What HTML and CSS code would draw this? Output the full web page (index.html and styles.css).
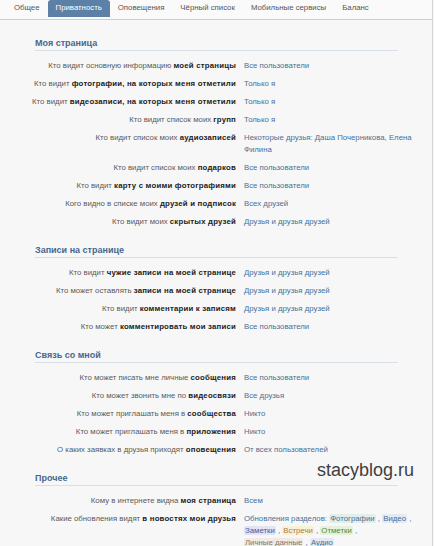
FILE: index.html
```html
<!DOCTYPE html>
<html lang="ru">
<head>
<meta charset="utf-8">
<title>Приватность</title>
<link rel="stylesheet" href="styles.css">
</head>
<body>
<div class="page">
  <nav class="tabs">
    <a class="tab">Общее</a>
    <a class="tab active">Приватность</a>
    <a class="tab">Оповещения</a>
    <a class="tab">Чёрный список</a>
    <a class="tab">Мобильные сервисы</a>
    <a class="tab">Баланс</a>
  </nav>
  <div class="content">
    <section class="sec">
      <h2 class="sec-title">Моя страница</h2>
      <div class="rows">
        <div class="row"><div class="label">Кто видит основную информацию <b>моей страницы</b></div><div class="value">Все пользователи</div></div>
        <div class="row"><div class="label">Кто видит <b>фотографии, на которых меня отметили</b></div><div class="value">Только я</div></div>
        <div class="row"><div class="label">Кто видит <b>видеозаписи, на которых меня отметили</b></div><div class="value">Только я</div></div>
        <div class="row"><div class="label">Кто видит список моих <b>групп</b></div><div class="value">Только я</div></div>
        <div class="row"><div class="label">Кто видит список моих <b>аудиозаписей</b></div><div class="value">Некоторые друзья: Даша Почерникова, Елена Филина</div></div>
        <div class="row"><div class="label">Кто видит список моих <b>подарков</b></div><div class="value">Все пользователи</div></div>
        <div class="row"><div class="label">Кто видит <b>карту с моими фотографиями</b></div><div class="value">Все пользователи</div></div>
        <div class="row"><div class="label">Кого видно в списке моих <b>друзей и подписок</b></div><div class="value">Всех друзей</div></div>
        <div class="row"><div class="label">Кто видит моих <b>скрытых друзей</b></div><div class="value">Друзья и друзья друзей</div></div>
      </div>
    </section>
    <section class="sec">
      <h2 class="sec-title">Записи на странице</h2>
      <div class="rows">
        <div class="row"><div class="label">Кто видит <b>чужие записи на моей странице</b></div><div class="value">Друзья и друзья друзей</div></div>
        <div class="row"><div class="label">Кто может оставлять <b>записи на моей странице</b></div><div class="value">Друзья и друзья друзей</div></div>
        <div class="row"><div class="label">Кто видит <b>комментарии к записям</b></div><div class="value">Друзья и друзья друзей</div></div>
        <div class="row"><div class="label">Кто может <b>комментировать мои записи</b></div><div class="value">Все пользователи</div></div>
      </div>
    </section>
    <section class="sec">
      <h2 class="sec-title">Связь со мной</h2>
      <div class="rows">
        <div class="row"><div class="label">Кто может писать мне личные <b>сообщения</b></div><div class="value">Все пользователи</div></div>
        <div class="row"><div class="label">Кто может звонить мне по <b>видеосвязи</b></div><div class="value">Все друзья</div></div>
        <div class="row"><div class="label">Кто может приглашать меня в <b>сообщества</b></div><div class="value">Никто</div></div>
        <div class="row"><div class="label">Кто может приглашать меня в <b>приложения</b></div><div class="value">Никто</div></div>
        <div class="row"><div class="label">О каких заявках в друзья приходят <b>оповещения</b></div><div class="value">От всех пользователей</div></div>
      </div>
    </section>
    <section class="sec">
      <h2 class="sec-title">Прочее</h2>
      <div class="rows">
        <div class="row"><div class="label">Кому в интернете видна <b>моя страница</b></div><div class="value">Всем</div></div>
        <div class="row"><div class="label">Какие обновления видят <b>в новостях мои друзья</b></div><div class="value tags">Обновления разделов: <span class="tag t-photo">Фотографии</span> , <span class="tag t-video">Видео</span> , <span class="tag t-notes">Заметки</span> , <span class="tag t-events">Встречи</span> , <span class="tag t-marks">Отметки</span> , <span class="tag t-personal">Личные данные</span> , <span class="tag t-audio">Аудио</span></div></div>
      </div>
    </section>
  </div>
  <div class="watermark">stacyblog.ru</div>
</div>
</body>
</html>
```

FILE: styles.css
```css
html, body {
  margin: 0;
  padding: 0;
  background: #f7f7f7;
}

.page {
  position: relative;
  width: 432px;
  height: 546px;
  overflow: hidden;
  border-right: 1px solid #cfd4d9;
  background: #f7f7f7;
  font-family: "Liberation Sans", Arial, sans-serif;
  font-size: 7.8px;
  color: #555;
}

.tabs {
  display: flex;
  align-items: flex-end;
  height: 19px;
  padding-left: 6px;
  background: #fafafa;
  border-bottom: 1px solid #c8ced5;
}

.tab {
  display: block;
  padding: 0 8px;
  height: 17px;
  line-height: 16px;
  margin-bottom: 2px;
  color: #555;
  font-size: 7.8px;
  border-radius: 3px 3px 0 0;
}

.tab.active {
  background: #5d80a6;
  color: #fff;
}

.content {
  padding: 16px 0 0 35px;
}

.sec + .sec {
  margin-top: 12px;
}

.sec-title {
  margin: 0;
  width: 363px;
  font-size: 9px;
  font-weight: bold;
  line-height: 14px;
  color: #45688e;
  border-bottom: 1px solid #d8dfe7;
}

.rows {
  padding-top: 6px;
  margin-left: -20px;
}

.row {
  display: grid;
  grid-template-columns: 221px 172px;
  column-gap: 8px;
  padding: 3px 0;
  line-height: 12px;
}

.label {
  text-align: right;
  white-space: nowrap;
  color: #5a5a5a;
}

.label b {
  color: #222;
  letter-spacing: 0.2px;
}

.value {
  color: #4a6f96;
}

.tags {
  line-height: 12px;
}

.tag {
  padding: 0 1px;
  border-radius: 2px;
  white-space: nowrap;
}

.t-photo { background: #e1efea; }
.t-video { background: #e1eaf5; }
.t-notes { background: #e2e3f5; color: #4b5b9b; }
.t-events { background: #f8f1da; color: #b07c42; }
.t-marks { background: #e5f2db; color: #55893a; }
.t-personal { background: #efebe4; color: #86776a; }
.t-audio { background: #e1eaf5; }

.watermark {
  position: absolute;
  left: 317px;
  top: 460px;
  font-family: "Liberation Sans", Arial, sans-serif;
  font-size: 18px;
  color: #3e3e3e;
}
```
